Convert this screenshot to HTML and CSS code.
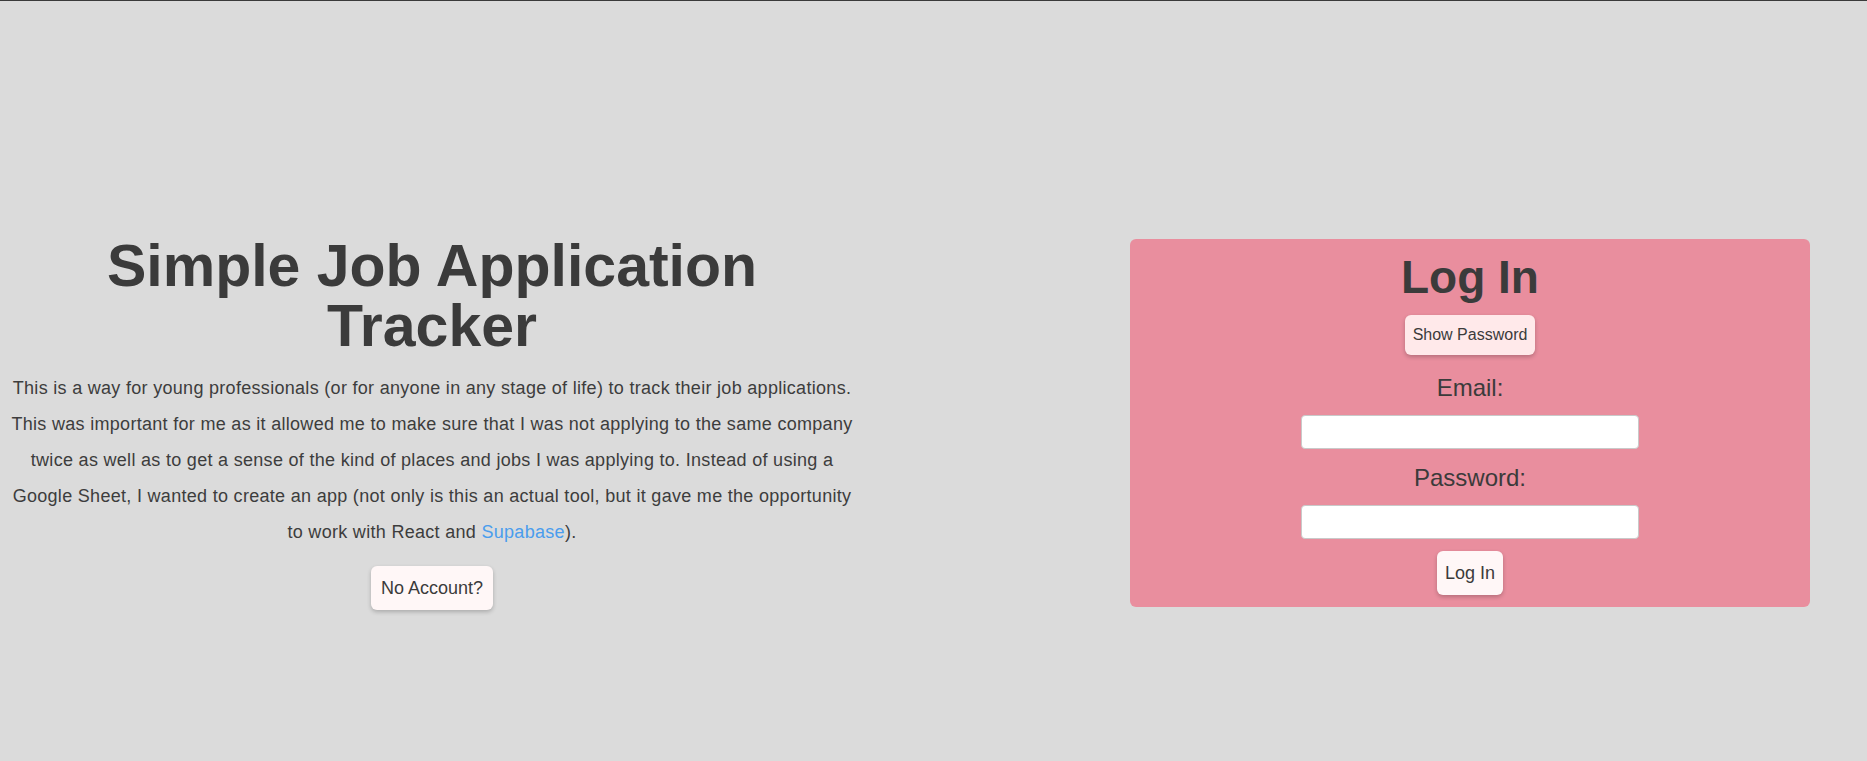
FILE: index.html
```html
<!DOCTYPE html>
<html lang="en">
<head>
<meta charset="utf-8">
<title>Simple Job Application Tracker</title>
<link rel="stylesheet" href="styles.css">
</head>
<body>
<main class="page">
  <section class="intro">
    <h1 class="title">Simple Job Application Tracker</h1>
    <p class="about">This is a way for young professionals (or for anyone in any stage of life) to track their job applications. This was important for me as it allowed me to make sure that I was not applying to the same company twice as well as to get a sense of the kind of places and jobs I was applying to. Instead of using a Google Sheet, I wanted to create an app (not only is this an actual tool, but it gave me the opportunity to work with React and <a class="link" href="#">Supabase</a>).</p>
    <button class="btn btn-account" type="button">No Account?</button>
  </section>
  <section class="side">
    <form class="card">
      <h2 class="card-title">Log In</h2>
      <button class="btn btn-show" type="button">Show Password</button>
      <label class="label label-email" for="email">Email:</label>
      <input class="field" id="email" type="email">
      <label class="label label-pass" for="pass">Password:</label>
      <input class="field" id="pass" type="password">
      <button class="btn btn-login" type="button">Log In</button>
    </form>
  </section>
</main>
</body>
</html>
```

FILE: styles.css
```css
* { box-sizing: border-box; }
html, body { margin: 0; padding: 0; }
body {
  background: #dbdbdb;
  border-top: 1px solid #3a3a3a;
  font-family: "Liberation Sans", Arial, sans-serif;
  color: #3b3b3b;
  height: 761px;
  overflow: hidden;
}
.page {
  display: grid;
  grid-template-columns: 864px 1fr;
  align-items: center;
  padding-top: 84px;
  height: 760px;
}
.intro {
  display: flex;
  flex-direction: column;
  align-items: center;
  text-align: center;
}
.title {
  margin: 0;
  font-size: 59px;
  line-height: 60px;
  font-weight: 700;
  color: #3b3b3b;
}
.about {
  margin: 14px 0 0;
  padding: 0 6px;
  font-size: 18px;
  line-height: 36px;
  letter-spacing: 0.3px;
  color: #3d3d3d;
}
.link { color: #4a9ded; text-decoration: none; }
.btn {
  font-family: "Liberation Sans", Arial, sans-serif;
  color: #3b3b3b;
  border: none;
  border-radius: 6px;
  background: #fff7f7;
  box-shadow: 0 2px 4px rgba(0, 0, 0, 0.22);
  cursor: pointer;
}
.btn-account {
  margin-top: 16px;
  font-size: 18px;
  line-height: 20px;
  padding: 12px 10px;
}
.side {
  padding-left: 266px;
}
.card {
  width: 680px;
  background: #e98e9e;
  border-radius: 6px;
  display: flex;
  flex-direction: column;
  align-items: center;
  padding: 12px 0 12px;
}
.card-title {
  margin: 0;
  font-size: 46px;
  line-height: 52px;
  font-weight: 700;
}
.btn-show {
  margin-top: 12px;
  background: #ffe9ea;
  font-size: 16px;
  line-height: 18px;
  padding: 11px 8px;
}
.label {
  font-size: 24px;
  line-height: 28px;
  color: #3b3b3b;
}
.label-email { margin-top: 19px; }
.label-pass { margin-top: 15px; }
.field {
  margin-top: 13px;
  width: 338px;
  height: 34px;
  border: 1px solid #c9c9c9;
  border-radius: 4px;
  background: #fff;
}
.btn-login {
  margin-top: 12px;
  font-size: 18px;
  line-height: 20px;
  padding: 12px 8px;
}
```
